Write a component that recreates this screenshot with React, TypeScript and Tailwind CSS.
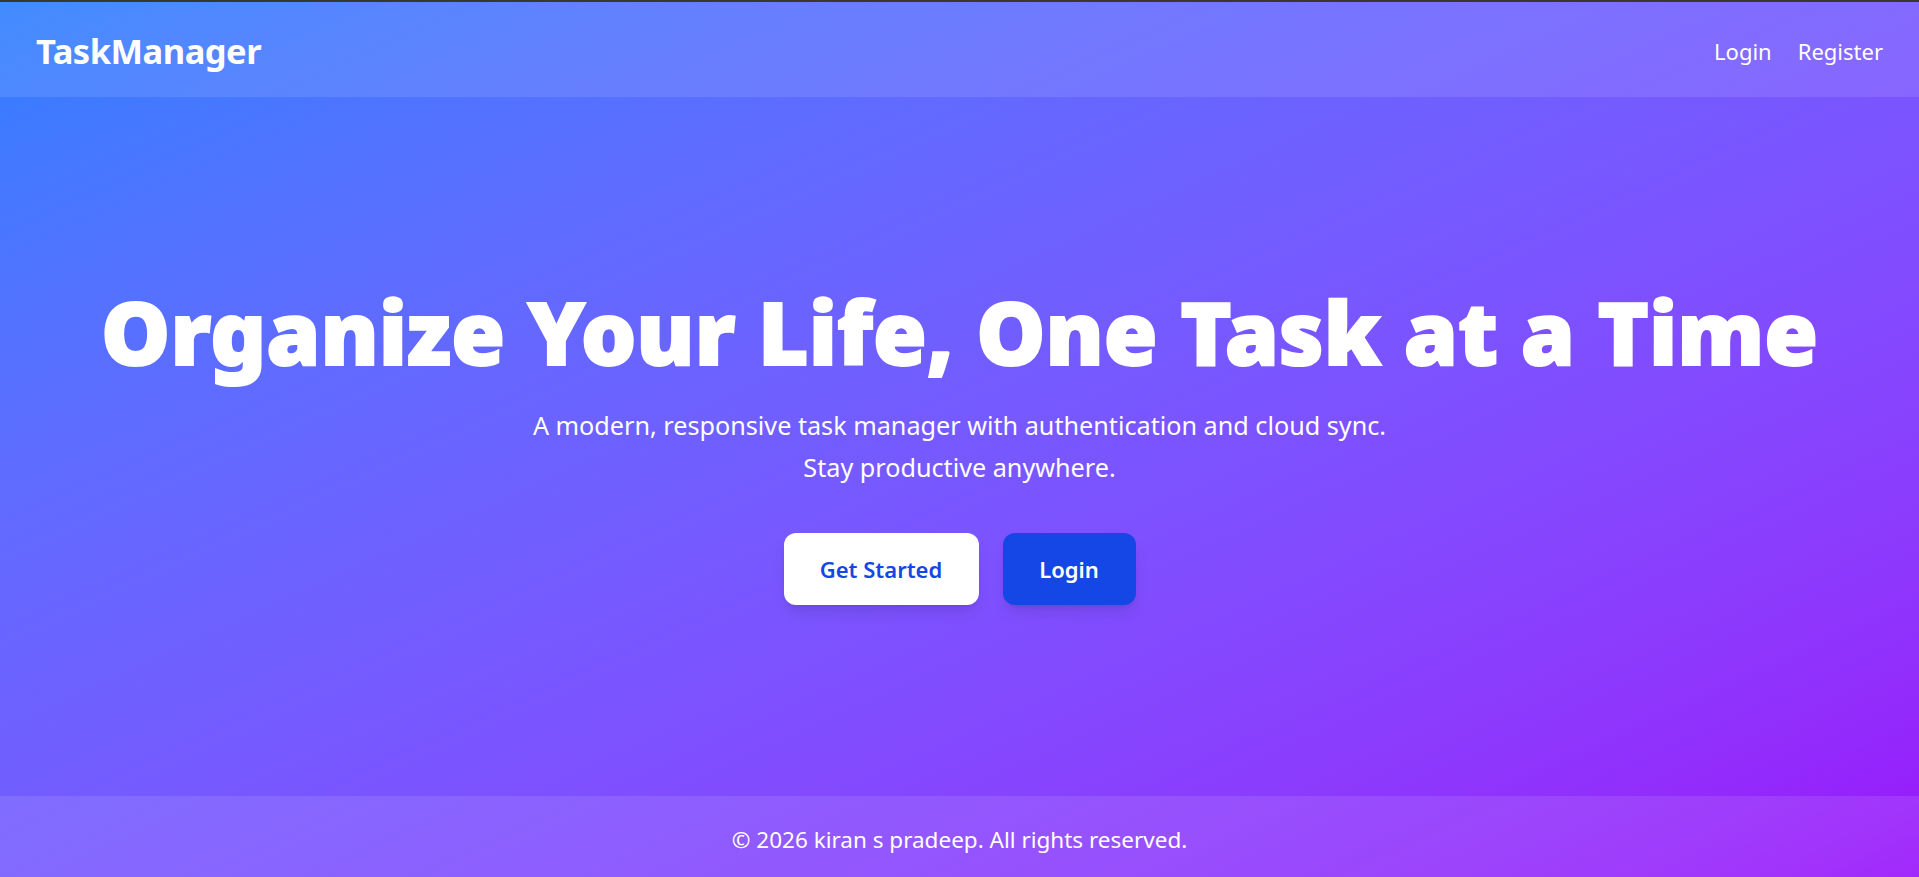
export default function App() {
  return (
    <div className="flex min-h-screen flex-col bg-gradient-to-br from-blue-500 to-purple-600 font-['Noto_Sans','Open_Sans',sans-serif] text-white">
      <div className="h-[2px] bg-[#3a3733]" />

      <header className="flex h-[95px] items-center justify-between bg-white/10 px-[36px] pt-[3px]">
        <a href="#" className="text-[34.5px] font-bold tracking-[-0.5px]">
          TaskManager
        </a>
        <nav className="flex items-center gap-[26px] text-[22px]">
          <a href="#">Login</a>
          <a href="#">Register</a>
        </nav>
      </header>

      <main className="flex flex-1 flex-col items-center justify-center text-center">
        <h1 className="text-[87px] leading-none font-black [-webkit-text-stroke:2px_white]">
          Organize Your Life, One Task at a Time
        </h1>
        <p className="mt-[29px] text-[25.2px] leading-[42px]">
          A modern, responsive task manager with authentication and cloud sync.
          <br />
          Stay productive anywhere.
        </p>
        <div className="mt-[45px] flex gap-[24px]">
          <a
            href="#"
            className="flex h-[72px] w-[195px] items-center justify-center rounded-[12px] bg-white text-[22px] font-semibold text-blue-700 shadow-lg"
          >
            Get Started
          </a>
          <a
            href="#"
            className="flex h-[72px] w-[133px] items-center justify-center rounded-[12px] bg-blue-700 text-[22px] font-semibold text-white shadow-lg"
          >
            Login
          </a>
        </div>
      </main>

      <footer className="flex h-[81px] items-center justify-center bg-white/10 pt-[6px] text-[22.5px]">
        © 2026 kiran s pradeep. All rights reserved.
      </footer>
    </div>
  )
}
